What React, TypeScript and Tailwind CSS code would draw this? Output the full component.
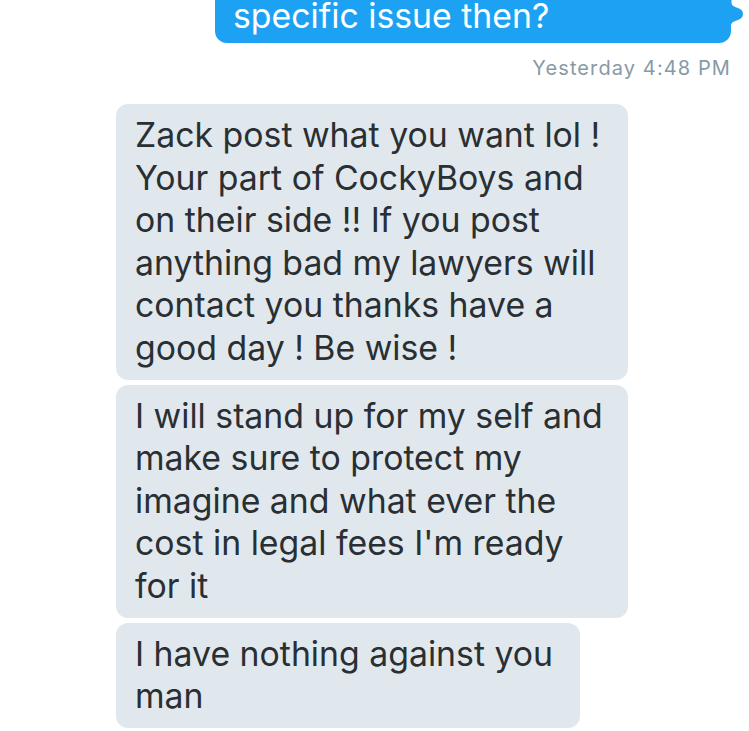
// region data
const mensajes: string[][] = [
  [
    "Zack post what you want lol !",
    "Your part of CockyBoys and",
    "on their side !! If you post",
    "anything bad my lawyers will",
    "contact you thanks have a",
    "good day ! Be wise !",
  ],
  [
    "I will stand up for my self and",
    "make sure to protect my",
    "imagine and what ever the",
    "cost in legal fees I'm ready",
    "for it",
  ],
  ["I have nothing against you", "man"],
];
// endregion

// region component
export default function App() {
  return (
    <div
      className="w-[749px] h-[731px] overflow-hidden bg-white pr-[18px]"
      style={{ fontFamily: "Inter, 'Noto Sans', sans-serif" }}
    >
      {/* Mensaje enviado */}
      <div className="relative ml-auto w-[516px] -mt-[16px] rounded-[12px] bg-[#1da1f2] pl-[18px] pr-4 pt-[10px] pb-[6px] text-[33.8px] leading-[43px] text-white">
        <div className="whitespace-nowrap">specific issue then?</div>
        <svg
          className="absolute left-full bottom-[19px]"
          width="14"
          height="24"
          viewBox="0 0 14 24"
        >
          <path
            d="M0 0 L0 3 C1 6 4 7 7 8 C10 9 12 11 12 14 C12 17 10 19 7 20 C4 21 1 22 0 24 L0 0 Z"
            fill="#1da1f2"
          />
          <rect x="-1" y="0" width="1.5" height="24" fill="#1da1f2" />
        </svg>
      </div>

      {/* Hora */}
      <div className="mt-[13px] text-right text-[20px] leading-[24px] tracking-[1.1px] text-[#8899a6]">
        Yesterday 4:48 PM
      </div>

      {/* Mensajes recibidos */}
      <div className="mt-[24px] flex flex-col items-start gap-[5px] pl-[116px]">
        {mensajes.map((lineas, i) => (
          <div
            key={i}
            className={`rounded-[12px] bg-[#e1e8ed] pl-[19px] pt-[10px] pb-[10px] text-[33.8px] leading-[42.6px] text-[#292f33] ${
              i < 2 ? "w-[512px]" : "w-[464px]"
            }`}
          >
            {lineas.map((linea) => (
              <div key={linea} className="whitespace-nowrap">
                {linea}
              </div>
            ))}
          </div>
        ))}
      </div>
    </div>
  );
}
// endregion
